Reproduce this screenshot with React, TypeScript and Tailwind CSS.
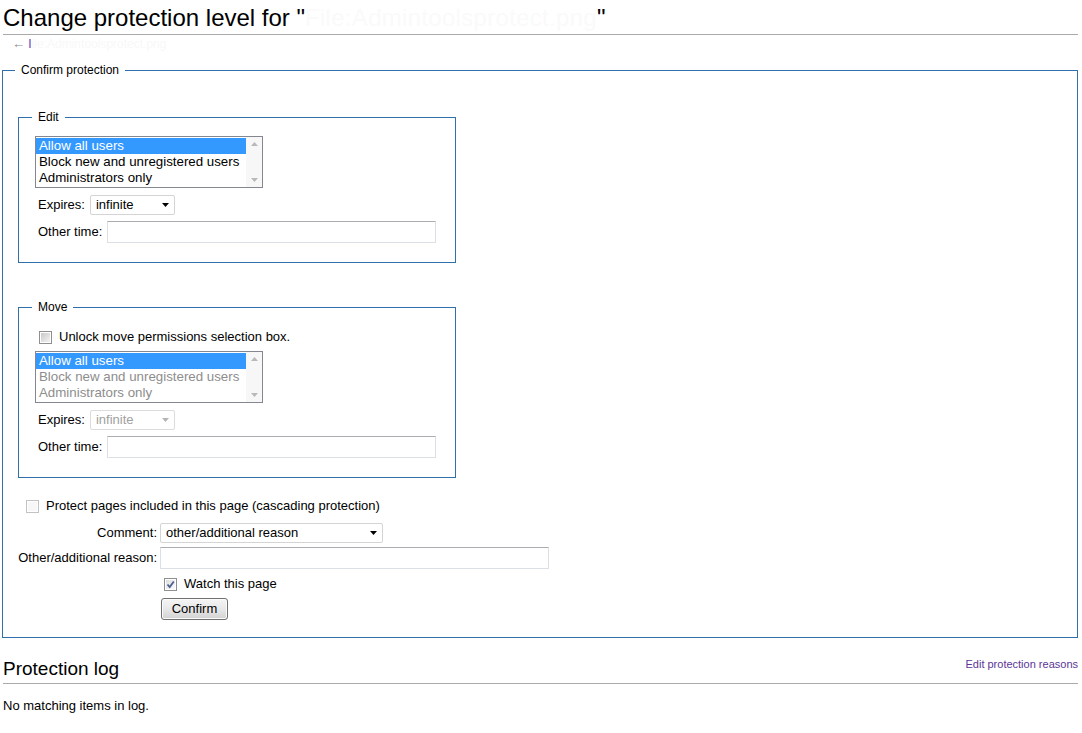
import React from 'react';

function Checkbox({ checked = false, disabled = false, gray = false }: { checked?: boolean; disabled?: boolean; gray?: boolean }) {
  return (
    <div className={`flex h-[13px] w-[13px] shrink-0 items-center justify-center border bg-white p-[1px] ${disabled ? 'border-[#c2c2c2]' : 'border-[#8e8f8f]'}`}>
      <div
        className={`relative h-full w-full ${
          disabled ? 'bg-[#f7f7f7]' : gray ? 'bg-linear-to-br from-[#c9c9c9] to-[#f4f4f4]' : 'bg-linear-to-br from-[#dedede] to-[#fbfbfb]'
        }`}
      >
        {checked && (
          <svg viewBox="0 0 9 9" className="absolute inset-0 h-full w-full">
            <path d="M1.5 4.5 L3.7 7 L7.8 1.5" fill="none" stroke="#4b5f95" strokeWidth="1.8" />
          </svg>
        )}
      </div>
    </div>
  );
}

function ListBox({ disabled = false }: { disabled?: boolean }) {
  const options = ['Allow all users', 'Block new and unregistered users', 'Administrators only'];
  return (
    <div className="flex h-[52px] w-[228px] border border-[#828790] bg-white">
      <div className="w-[210px] pt-[1px] text-[13.3px] leading-[16px]">
        {options.map((o, i) => (
          <div
            key={o}
            className={`h-[16px] whitespace-nowrap pl-[3px] ${
              i === 0 ? 'bg-[#3399ff] text-white' : disabled ? 'text-[#8d8d8d]' : 'text-black'
            }`}
          >
            {o}
          </div>
        ))}
      </div>
      <div className="flex w-[16px] flex-col items-center justify-between bg-[#f7f7f7] py-[5px]">
        <svg width="7" height="4" viewBox="0 0 7 4"><path d="M0 4 L3.5 0 L7 4 Z" fill="#b9b9b9" /></svg>
        <svg width="7" height="4" viewBox="0 0 7 4"><path d="M0 0 L3.5 4 L7 0 Z" fill="#b9b9b9" /></svg>
      </div>
    </div>
  );
}

function Dropdown({ value, width, disabled = false }: { value: string; width: string; disabled?: boolean }) {
  return (
    <div
      className={`flex h-[20px] items-center justify-between rounded-[2px] border bg-white pl-[5px] pr-[5px] text-[13px] leading-[18px] ${width} ${
        disabled ? 'border-[#dcdcdc] text-[#a0a0a0]' : 'border-[#d4d4d4] text-black'
      }`}
    >
      <span className="whitespace-nowrap">{value}</span>
      <svg width="7" height="4" viewBox="0 0 7 4"><path d="M0 0 L3.5 4 L7 0 Z" fill={disabled ? '#b4b4b4' : '#000'} /></svg>
    </div>
  );
}

function TextInput({ width }: { width: string }) {
  return <div className={`h-[22px] border border-[#dbdfe6] border-t-[#abadb3] bg-white ${width}`} />;
}

function PermissionBox({ title, disabled = false }: { title: string; disabled?: boolean }) {
  return (
    <fieldset className={`ml-[3px] w-[438px] border border-[#2f6fab] pl-[13px] pb-[19px] ${title === 'Edit' ? 'mt-[29px]' : 'mt-[35px]'}`}>
      <legend className="px-[6px] text-[12px] leading-[18px]">{title}</legend>
      <div className="pl-[3px]">
        {disabled ? (
          <div className="mt-[11px] flex h-[20px] items-center">
            <div className="ml-[4px]"><Checkbox gray /></div>
            <span className="ml-[7px] text-[13px]">Unlock move permissions selection box.</span>
          </div>
        ) : null}
        <div className={disabled ? 'mt-[4px]' : 'mt-[10px]'}>
          <ListBox disabled={disabled} />
        </div>
        <div className="mt-[7px] flex h-[20px] items-center gap-[5px] pl-[3px] text-[13px]">
          <span>Expires:</span>
          <Dropdown value="infinite" width="w-[85px]" disabled={disabled} />
        </div>
        <div className="mt-[6px] flex h-[22px] items-center gap-[5px] pl-[3px] text-[13px]">
          <span>Other time:</span>
          <TextInput width="w-[329px]" />
        </div>
      </div>
    </fieldset>
  );
}

export default function App() {
  return (
    <div className="min-h-screen bg-white font-['Liberation_Sans',Arial,sans-serif] text-black">
      <div className="pl-[2px] pr-[4px]">
        <h1 className="ml-[1px] whitespace-nowrap border-b border-[#aaaaaa] pt-[3px] pb-[1px] text-[24px] font-normal leading-[30px]">
          Change protection level for "<span className="tracking-[0.3px] text-[#fafafa]">File:Admintoolsprotect.png</span>"
        </h1>
        <div className="ml-[10px] h-[18px] whitespace-nowrap text-[12px] leading-[18px] text-[#8a8a8a]">
          <span className="text-[13px]">←</span> <span className="text-[#6a3fb0]">I</span>
          <span className="text-[#f8f8f8]">ile:Admintoolsprotect.png</span>
        </div>

        <fieldset className="mt-[8px] border border-[#2f6fab] px-[12px] pb-[17px]">
          <legend className="px-[6px] text-[12px] leading-[18px]">Confirm protection</legend>

          <PermissionBox title="Edit" />
          <PermissionBox title="Move" disabled />

          <div className="mt-[18px] flex h-[20px] items-center text-[13px]">
            <div className="ml-[11px]"><Checkbox disabled /></div>
            <span className="ml-[7px]">Protect pages included in this page (cascading protection)</span>
          </div>

          <div className="mt-[7px] flex h-[20px] items-center text-[13px]">
            <div className="w-[145px] pr-[3px] text-right">Comment:</div>
            <Dropdown value="other/additional reason" width="w-[223px]" />
          </div>

          <div className="mt-[4px] flex h-[22px] items-center text-[13px]">
            <div className="w-[145px] whitespace-nowrap pr-[3px] text-right">Other/additional reason:</div>
            <TextInput width="w-[389px]" />
          </div>

          <div className="mt-[5px] flex h-[20px] items-center text-[13px]">
            <div className="ml-[149px]"><Checkbox checked /></div>
            <span className="ml-[7px]">Watch this page</span>
          </div>

          <div className="mt-[4px] pl-[146px]">
            <button className="flex h-[22px] w-[67px] items-center justify-center rounded-[3px] border border-[#707070] bg-linear-to-b from-[#f5f5f5] via-[#e8e8e8] to-[#d2d2d2] text-[13px] text-black shadow-[inset_0_0_0_1px_#fbfbfb]">
              Confirm
            </button>
          </div>
        </fieldset>

        <div className="ml-[1px] mt-[18px] flex items-start justify-between border-b border-[#aaaaaa]">
          <h2 className="pb-[1px] text-[19px] font-normal leading-[26px]">Protection log</h2>
          <a className="text-[11px] leading-[16px] text-[#5a3696]">Edit protection reasons</a>
        </div>
        <p className="ml-[1px] mt-[12px] text-[13px] leading-[19px]">No matching items in log.</p>
      </div>
    </div>
  );
}
